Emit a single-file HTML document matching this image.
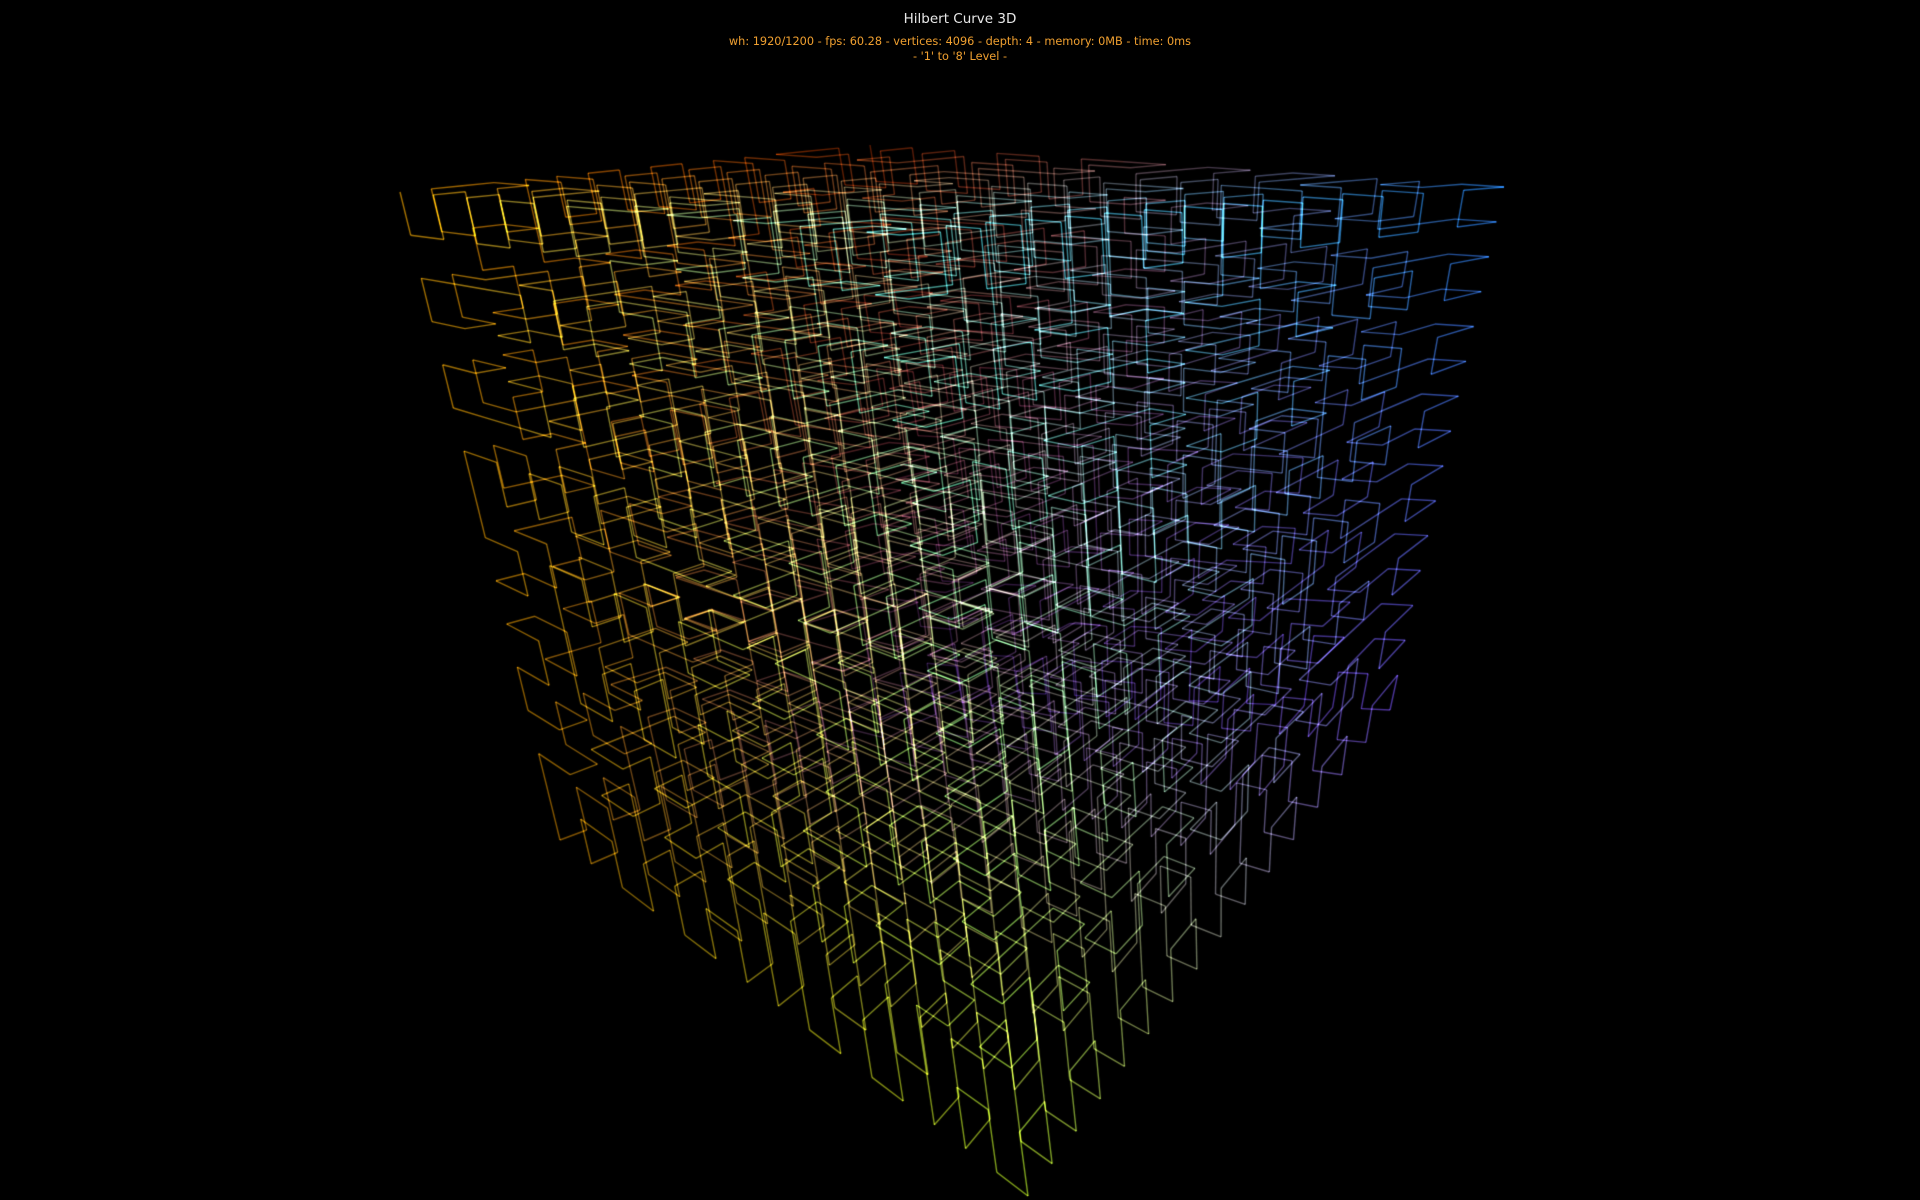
<!DOCTYPE html>
<html><head><meta charset="utf-8">
<style>
html,body{margin:0;padding:0;background:#000;width:1920px;height:1200px;overflow:hidden}
canvas{position:absolute;left:0;top:0}
.t{position:absolute;left:0;width:1920px;text-align:center;font-family:"DejaVu Sans","Liberation Sans",sans-serif}
#a{top:11px;font-size:13.5px;color:#e8e8e8}
#b{top:35px;font-size:11.3px;color:#f0a030}
#c{top:50px;font-size:11.3px;color:#f0a030}
</style></head><body>
<canvas id="cv" width="1920" height="1200"></canvas>
<div class="t" id="a">Hilbert Curve 3D</div>
<div class="t" id="b">wh: 1920/1200 - fps: 60.28 - vertices: 4096 - depth: 4 - memory: 0MB - time: 0ms</div>
<div class="t" id="c">- '1' to '8' Level -</div>
<script>
(function(){
var b=4,n=3,pts=[];
for(var h=0;h<4096;h++){
  var X=[0,0,0];
  for(var k=0;k<b*n;k++){
    var bit=(h>>(b*n-1-k))&1;
    X[k%n]|=bit<<(b-1-Math.floor(k/n));
  }
  var N=2<<(b-1),t=X[n-1]>>1,i;
  for(i=n-1;i>0;i--)X[i]^=X[i-1];
  X[0]^=t;
  for(var Q=2;Q!=N;Q<<=1){var P=Q-1;for(i=n-1;i>=0;i--){if(X[i]&Q)X[0]^=P;else{t=(X[0]^X[i])&P;X[0]^=t;X[i]^=t;}}}
  pts.push([X[0]/15,X[1]/15,X[2]/15]);
}
var C={
 '000':[400,192],'100':[870,145],'110':[1504,187],'010':[900,235],
 '001':[560,840],'101':[960,690],'111':[1390,710],'011':[1028,1196]};
var K={
 '000':[255,175,0],'100':[255,70,0],'110':[40,140,255],'010':[90,240,240],
 '001':[200,130,0],'101':[90,50,170],'111':[120,80,240],'011':[200,255,40]};
function tri(M,a,bb,c){
  var r=[];for(var d=0;d<M['000'].length;d++){
    var v=0;
    for(var i=0;i<2;i++)for(var j=0;j<2;j++)for(var l=0;l<2;l++){
      var w=(i?a:1-a)*(j?bb:1-bb)*(l?c:1-c);
      v+=w*M[''+i+j+l][d];
    }
    r.push(v);
  }return r;}
var ctx=document.getElementById('cv').getContext('2d');
ctx.fillStyle='#000';ctx.fillRect(0,0,1920,1200);
ctx.globalCompositeOperation='lighter';
ctx.lineWidth=1.4;
var S=pts.map(function(p){return tri(C,p[0],p[1],p[2]);});
for(var i=0;i<pts.length-1;i++){
  var p=pts[i],q=pts[i+1];
  var m=[(p[0]+q[0])/2,(p[1]+q[1])/2,(p[2]+q[2])/2];
  var col=tri(K,m[0],m[1],m[2]);
  var near=1-0.45*(m[0]*(1-m[1]));
  ctx.strokeStyle='rgba('+(col[0]|0)+','+(col[1]|0)+','+(col[2]|0)+','+(0.65*near).toFixed(3)+')';
  ctx.beginPath();ctx.moveTo(S[i][0],S[i][1]);ctx.lineTo(S[i+1][0],S[i+1][1]);ctx.stroke();
}
})();
</script>
</body></html>
